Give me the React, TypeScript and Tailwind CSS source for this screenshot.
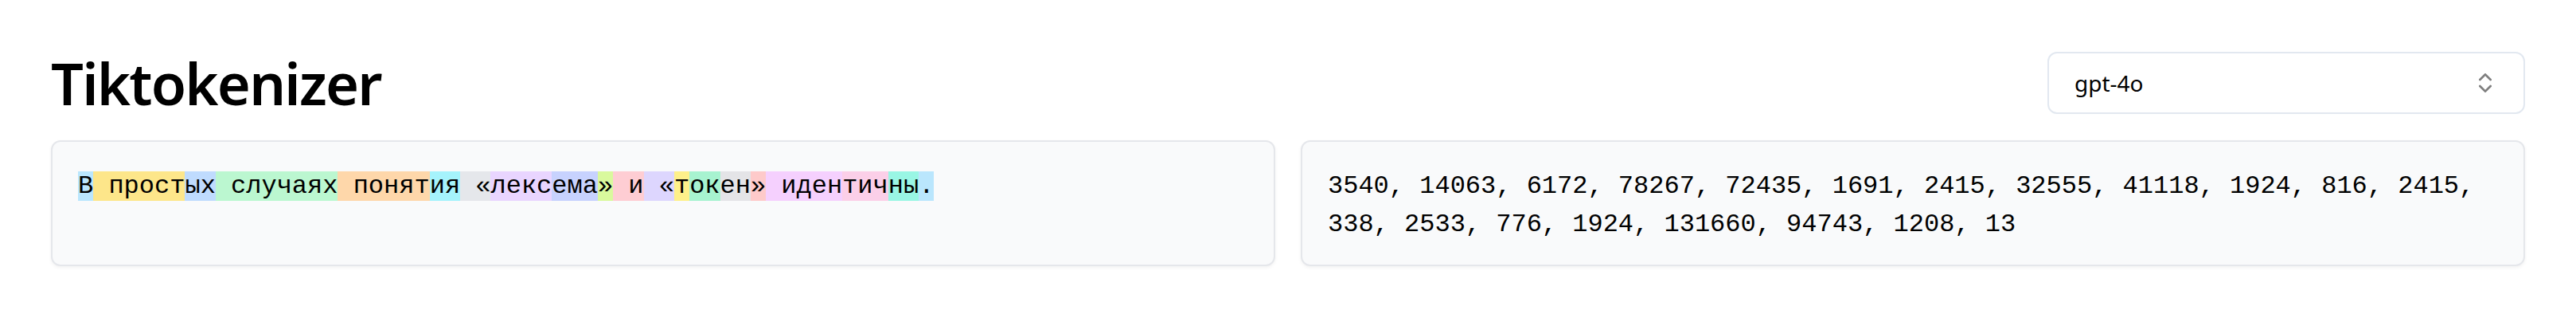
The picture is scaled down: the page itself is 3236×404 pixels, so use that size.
import { ChevronsUpDown } from "lucide-react";

// token pieces and their ids, as the tokenizer split the sample sentence
const TOKENS: { text: string; color: string }[] = [
  { text: "В", color: "bg-[#bae6fd]" },
  { text: " прост", color: "bg-[#fde68a]" },
  { text: "ых", color: "bg-[#bfdbfe]" },
  { text: " случаях", color: "bg-[#bbf7d0]" },
  { text: " понят", color: "bg-[#fed7aa]" },
  { text: "ия", color: "bg-[#a5f3fc]" },
  { text: " «", color: "bg-[#e5e7eb]" },
  { text: "лекс", color: "bg-[#e9d5ff]" },
  { text: "ема", color: "bg-[#c7d2fe]" },
  { text: "»", color: "bg-[#d9f99d]" },
  { text: " и", color: "bg-[#fecdd3]" },
  { text: " «", color: "bg-[#ddd6fe]" },
  { text: "т", color: "bg-[#fef08a]" },
  { text: "ок", color: "bg-[#a7f3d0]" },
  { text: "ен", color: "bg-[#e4e4e7]" },
  { text: "»", color: "bg-[#fecaca]" },
  { text: " иден", color: "bg-[#f5d0fe]" },
  { text: "тич", color: "bg-[#fbcfe8]" },
  { text: "ны", color: "bg-[#99f6e4]" },
  { text: ".", color: "bg-[#bae6fd]" },
];

const IDS = [
  3540, 14063, 6172, 78267, 72435, 1691, 2415, 32555, 41118, 1924, 816, 2415,
  338, 2533, 776, 1924, 131660, 94743, 1208, 13,
];

export default function App() {
  return (
    <div className="min-h-screen bg-white px-16 pt-16 flex flex-col gap-8 text-black">
      {/* ── Header ─────────────────────────────────────────── */}
      <div className="flex items-center justify-between h-[80px]">
        <h1 className="font-['Noto_Sans',sans-serif] font-semibold tracking-tight text-[72px] leading-[80px]">
          Tiktokenizer
        </h1>
        <button className="w-[600px] h-[78px] flex items-center justify-between rounded-[12px] border-2 border-[#e2e8f0] bg-white px-8 font-['Noto_Sans',sans-serif] text-[28px] text-black">
          <span>gpt-4o</span>
          <ChevronsUpDown size={32} className="opacity-50" />
        </button>
      </div>

      {/* ── Text / token ids ───────────────────────────────── */}
      <div className="grid grid-cols-2 gap-8">
        <div className="rounded-[12px] border-2 border-[#e5e7eb] bg-[#f9fafb] px-8 pt-8 pb-[26px] shadow-[0_2px_4px_rgba(0,0,0,0.05)] font-['Liberation_Mono',monospace] text-[32px] leading-[48px] whitespace-pre-wrap">
          {TOKENS.map((t, i) => (
            <span key={i} className={t.color}>
              {t.text}
            </span>
          ))}
        </div>
        <div className="rounded-[12px] border-2 border-[#e5e7eb] bg-[#f9fafb] px-8 pt-8 pb-[26px] shadow-[0_2px_4px_rgba(0,0,0,0.05)] font-['Liberation_Mono',monospace] text-[32px] leading-[48px]">
          {IDS.join(", ")}
        </div>
      </div>
    </div>
  );
}
